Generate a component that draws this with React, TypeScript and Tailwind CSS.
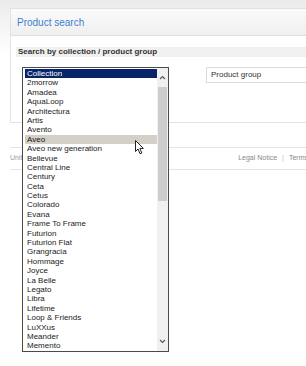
const collections = [
  'Collection', '2morrow', 'Amadea', 'AquaLoop', 'Architectura', 'Artis', 'Avento', 'Aveo',
  'Aveo new generation', 'Bellevue', 'Central Line', 'Century', 'Ceta', 'Cetus', 'Colorado',
  'Evana', 'Frame To Frame', 'Futurion', 'Futurion Flat', 'Grangracia', 'Hommage', 'Joyce',
  'La Belle', 'Legato', 'Libra', 'Lifetime', 'Loop & Friends', 'LuXXus', 'Meander', 'Memento',
];

const Chevron = ({ up }: { up?: boolean }) => (
  <svg width="7" height="5" viewBox="0 0 7 5">
    <polyline
      points={up ? '1,4 3.5,1.5 6,4' : '1,1 3.5,3.5 6,1'}
      fill="none"
      stroke="#5a5a5a"
      strokeWidth="1.2"
    />
  </svg>
);

// open listbox of the collection select
const CollectionList = () => (
  <div className="absolute left-[22px] top-[67px] w-[147px] h-[285px] border border-[#4a4a4a] bg-white flex">
    <div className="flex-1 overflow-hidden pt-[1px] pl-[2px]">
      {collections.map((name, i) => (
        <div
          key={name}
          className={
            'h-[9.4px] leading-[9.4px] pl-[2px] text-[8px] whitespace-nowrap ' +
            (i === 0 ? 'bg-[#0a246a] text-white' : i === 7 ? 'bg-[#d4d0c8] text-[#111]' : 'text-[#222]')
          }
        >
          {name}
        </div>
      ))}
    </div>
    <div className="w-[11px] bg-[#f0f0f0] flex flex-col">
      <div className="h-[19px] flex items-center justify-center">
        <Chevron up />
      </div>
      <div className="h-[114px] mx-[1px] bg-[#cdcdcd]" />
      <div className="flex-1" />
      <div className="h-[19px] flex items-center justify-center">
        <Chevron />
      </div>
    </div>
  </div>
);

const Cursor = () => (
  <svg className="absolute left-[135px] top-[140px]" width="10" height="15" viewBox="0 0 10 15">
    <path
      d="M0.5 0.5 L0.5 11.5 L3 9 L5 13.8 L6.8 13 L4.9 8.4 L8.4 8.4 Z"
      fill="#fff"
      stroke="#222"
      strokeWidth="1"
      strokeLinejoin="round"
    />
  </svg>
);

export default function App() {
  return (
    <div
      className="relative w-[306px] h-[366px] overflow-hidden bg-[linear-gradient(#ebebeb,#ffffff_55px)] pt-[8px]"
      style={{ fontFamily: '"Liberation Sans", Arial, sans-serif' }}
    >
      {/* panel */}
      <div className="ml-[10px] mr-[-20px] bg-white border-l border-t border-b border-[#e2e2e2]">
        <div className="h-[27px] flex items-center pl-[6px] bg-[linear-gradient(#fbfbfb,#efefef)] border-b border-[#e0e0e0]">
          <span className="text-[10px] text-[#3b7fcf]">Product search</span>
        </div>
        <div className="pt-[11px] pl-[5px] pb-[39px]">
          <div className="h-[10px] flex items-center pl-[2px] bg-[#f0f0f0] text-[8px] font-bold text-[#333]">
            Search by collection / product group
          </div>
          <div className="mt-[10px] flex">
            <div className="w-[190px]" />
            <div className="flex-1 h-[16px] border border-[#dcdcdc] bg-white flex items-center pl-[4px] text-[8px] text-[#333]">
              Product group
            </div>
          </div>
        </div>
      </div>

      {/* footer */}
      <div className="ml-[10px] mr-[-2px] mt-[24px] border-t border-b border-[#e4e4e4] h-[23px] flex items-center text-[7px] text-[#999]">
        <span>Unit</span>
        <div className="flex-1" />
        <span className="text-[#888]">Legal Notice</span>
        <span className="mx-[5px] text-[#bbb]">|</span>
        <span className="text-[#888] whitespace-nowrap">Terms</span>
      </div>

      <CollectionList />
      <Cursor />
    </div>
  );
}
